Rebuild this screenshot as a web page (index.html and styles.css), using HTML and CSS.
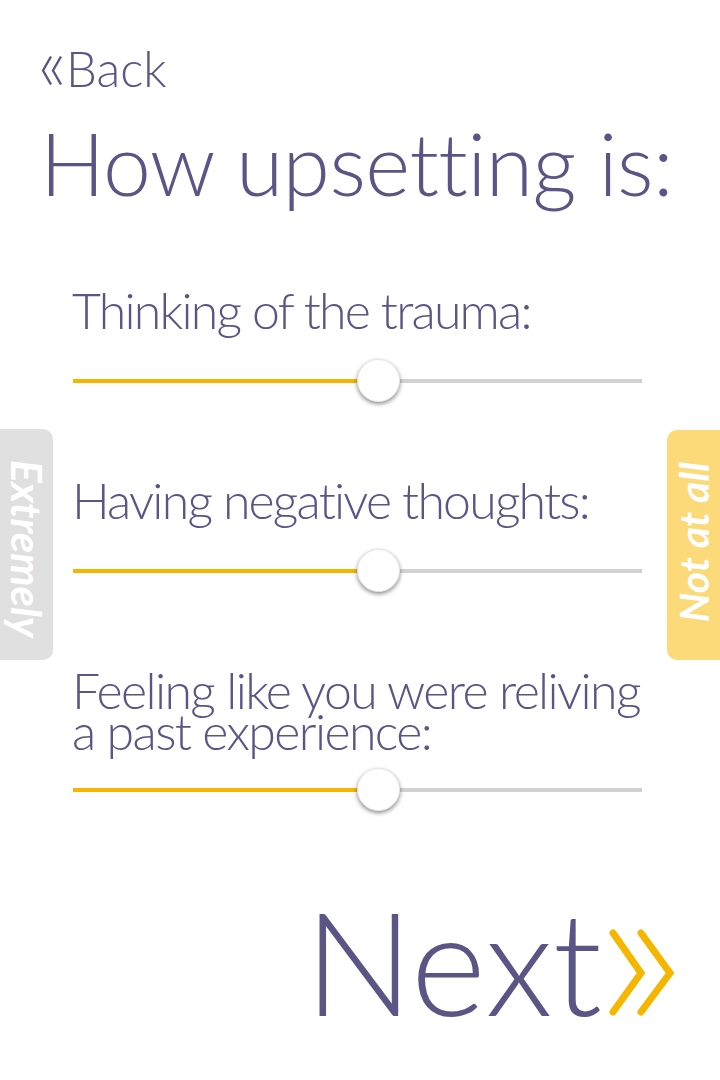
FILE: index.html
```html
<!DOCTYPE html>
<html lang="en">
<head>
<meta charset="utf-8">
<title>How upsetting is</title>
<link rel="stylesheet" href="styles.css">
</head>
<body>
<div class="screen">
  <a class="back" href="#">
    <svg class="back-icon" width="26" height="32" viewBox="0 0 26 32" aria-hidden="true">
      <polyline points="10,2.5 2,16.5 10,30.5" />
      <polyline points="20,2.5 12,16.5 20,30.5" />
    </svg><span>Back</span>
  </a>

  <h1 class="title">How upsetting is:</h1>

  <div class="questions">
    <div class="q">
      <div class="q-label">Thinking of the trauma:</div>
      <div class="slider">
        <div class="track"><div class="fill" style="width: 305px"></div></div>
        <div class="thumb" style="left: 284px"></div>
      </div>
    </div>
    <div class="q">
      <div class="q-label">Having negative thoughts:</div>
      <div class="slider">
        <div class="track"><div class="fill" style="width: 305px"></div></div>
        <div class="thumb" style="left: 284px"></div>
      </div>
    </div>
    <div class="q">
      <div class="q-label q-label--two">Feeling like you were reliving<br>a past experience:</div>
      <div class="slider">
        <div class="track"><div class="fill" style="width: 305px"></div></div>
        <div class="thumb" style="left: 284px"></div>
      </div>
    </div>
  </div>

  <div class="next-row">
    <a class="next" href="#"><span>Next</span><svg class="next-icon" width="72" height="88" viewBox="0 0 72 88" aria-hidden="true">
      <polyline points="7,5 35,45 7,84" />
      <polyline points="35,5 64,45 35,84" />
    </svg></a>
  </div>

  <div class="side side--left"><span>Extremely</span></div>
  <div class="side side--right"><span>Not at all</span></div>
</div>
</body>
</html>
```

FILE: styles.css
```css
* { box-sizing: border-box; }

html, body {
  margin: 0;
  padding: 0;
  background: #ffffff;
}

body {
  font-family: Lato, "Open Sans", sans-serif;
  font-weight: 300;
  color: #5b5586;
  font-variant-ligatures: none;
  font-feature-settings: "liga" 0, "clig" 0;
}

.screen {
  position: relative;
  width: 720px;
  height: 1080px;
  overflow: hidden;
  padding-top: 44px;
}

.back {
  display: block;
  padding-left: 41px;
  font-size: 49px;
  line-height: 48px;
  height: 48px;
  color: #5b5586;
  text-decoration: none;
  white-space: nowrap;
}

.back-icon {
  vertical-align: baseline;
  margin-bottom: 1px;
  margin-right: -1px;
}

.back-icon polyline {
  fill: none;
  stroke: #5b5586;
  stroke-width: 2.4;
  stroke-linecap: butt;
  stroke-linejoin: miter;
}

.title {
  margin: 28px 0 0 0;
  padding-left: 40px;
  font-size: 86px;
  line-height: 86px;
  font-weight: 300;
  letter-spacing: -0.6px;
  white-space: nowrap;
}

.questions {
  margin-top: 84px;
  padding-left: 72px;
  padding-right: 78px;
  display: flex;
  flex-direction: column;
  gap: 77px;
}

.q-label {
  font-size: 50px;
  line-height: 41px;
  letter-spacing: -1.8px;
  white-space: nowrap;
  margin-bottom: 28px;
}

.q-label--two {
  letter-spacing: -1.6px;
  margin-bottom: 16px;
}

.slider {
  position: relative;
  height: 44px;
  margin-left: 1px;
  display: flex;
  align-items: center;
}

.track {
  width: 100%;
  height: 4px;
  background: #d1d1d1;
}

.fill {
  height: 100%;
  background: #f7b500;
}

.thumb {
  position: absolute;
  top: 0;
  width: 43px;
  height: 43px;
  border-radius: 50%;
  background: #ffffff;
  border: 1px solid #e6e6e6;
  box-shadow: 0 2px 4px rgba(0, 0, 0, 0.45);
}

.next-row {
  margin-top: 77px;
  display: flex;
  justify-content: flex-end;
  padding-right: 42px;
}

.next {
  font-size: 144px;
  line-height: 144px;
  color: #5b5586;
  text-decoration: none;
  white-space: nowrap;
}

.next-icon {
  vertical-align: baseline;
  margin-left: 4px;
}

.next-icon polyline {
  fill: none;
  stroke: #f6b600;
  stroke-width: 7;
  stroke-linecap: round;
  stroke-linejoin: miter;
}

.side {
  position: absolute;
  top: 429px;
  width: 53px;
  height: 231px;
  display: flex;
  align-items: center;
  justify-content: center;
  color: #ffffff;
  font-weight: 700;
  font-style: italic;
  font-size: 42px;
  line-height: 1;
}

.side span {
  writing-mode: vertical-rl;
  white-space: nowrap;
}

.side--left {
  left: 0;
  background: #e0e0e0;
  border-radius: 0 10px 10px 0;
}

.side--left span {
  margin-top: 8px;
}

.side--right {
  right: 0;
  top: 430px;
  height: 230px;
  background: #fcd979;
  border-radius: 10px 0 0 10px;
  font-size: 41px;
}

.side--right span {
  transform: rotate(180deg);
  margin-top: -6px;
}
```
